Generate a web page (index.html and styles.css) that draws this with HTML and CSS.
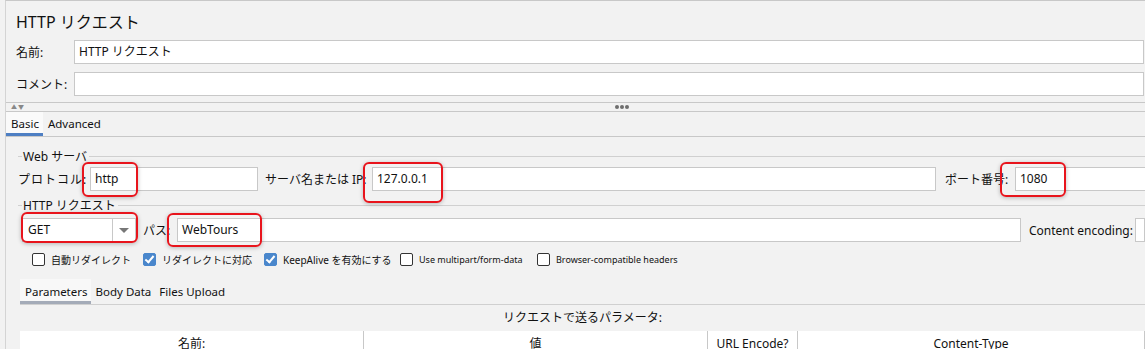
FILE: index.html
```html
<!DOCTYPE html>
<html lang="ja">
<head>
    <meta charset="UTF-8">
    <title>HTTP リクエスト</title>
    <link rel="stylesheet" href="styles.css">
</head>
<body>
    <div class="panel">
        <h1 class="title">HTTP リクエスト</h1>
        <div class="field-row first">
            <label class="field-label">名前:</label>
            <div class="input">HTTP リクエスト</div>
        </div>
        <div class="field-row">
            <label class="field-label">コメント:</label>
            <div class="input"></div>
        </div>

        <div class="splitter">
            <span class="arrows">▲▼</span>
            <span class="dots"><i></i><i></i><i></i></span>
        </div>

        <div class="tabs">
            <span class="tab active">Basic</span>
            <span class="tab">Advanced</span>
        </div>

        <div class="basic">
            <div class="group-title"><span>Web サーバ</span></div>
            <div class="server-row">
                <label class="lbl-protocol">プロトコル:</label>
                <div class="input protocol">http</div>
                <label class="lbl-server">サーバ名または IP:</label>
                <div class="input server">127.0.0.1</div>
                <label class="lbl-port">ポート番号:</label>
                <div class="input port">1080</div>
            </div>

            <div class="group-title second"><span>HTTP リクエスト</span></div>
            <div class="request-row">
                <div class="combo">
                    <span class="combo-value">GET</span>
                    <span class="combo-arrow"></span>
                </div>
                <label class="lbl-path">パス:</label>
                <div class="input path">WebTours</div>
                <label class="lbl-encoding">Content encoding:</label>
                <div class="input encoding"></div>
            </div>

            <div class="checks">
                <span class="check c1"><span class="box"></span>自動リダイレクト</span>
                <span class="check c2"><span class="box on"></span>リダイレクトに対応</span>
                <span class="check c3"><span class="box on"></span>KeepAlive を有効にする</span>
                <span class="check c4 small"><span class="box"></span>Use multipart/form-data</span>
                <span class="check small"><span class="box"></span>Browser-compatible headers</span>
            </div>

            <div class="subtabs">
                <span class="subtab active">Parameters</span>
                <span class="subtab">Body Data</span>
                <span class="subtab">Files Upload</span>
            </div>

            <div class="params-title">リクエストで送るパラメータ:</div>
            <div class="params-head">
                <div class="col name">名前:</div>
                <div class="col value">値</div>
                <div class="col encode">URL Encode?</div>
                <div class="col ctype">Content-Type</div>
            </div>
        </div>
    </div>

    <!-- annotation boxes drawn over the form -->
    <div class="mark m-protocol"></div>
    <div class="mark m-server"></div>
    <div class="mark m-port"></div>
    <div class="mark m-method"></div>
    <div class="mark m-path"></div>
</body>
</html>
```

FILE: styles.css
```css
body {
    margin: 0;
    background-color: #f2f2f2;
    font-family: "Noto Sans", "Noto Sans CJK JP", sans-serif;
    font-size: 12px;
    color: #111;
    height: 349px;
    overflow: hidden;
    position: relative;
}

.panel {
    margin-left: 5px;
    border-left: 1px solid #d4d4d4;
    border-top: 1px solid #c8c8c8;
    height: 349px;
}

.title {
    margin: 0;
    padding: 11px 0 0 10px;
    height: 28px;
    font-size: 16px;
    font-weight: normal;
    line-height: 20px;
}

.field-row {
    display: flex;
    align-items: center;
    padding-left: 10px;
    margin-bottom: 8px;
}

.field-label {
    width: 58px;
    flex-shrink: 0;
}

.input {
    box-sizing: border-box;
    height: 24px;
    background: #fff;
    border: 1px solid #c8c8c8;
    padding: 0 4px;
    line-height: 22px;
    white-space: nowrap;
    overflow: hidden;
}

.field-row .input {
    flex: 1;
    margin-right: 1px;
}

.splitter {
    margin-top: -2px;
    height: 8px;
    border-top: 1px solid #c8c8c8;
    border-bottom: 1px solid #c8c8c8;
    position: relative;
}

.arrows {
    position: absolute;
    left: 5px;
    top: 0;
    font-size: 6px;
    line-height: 8px;
    color: #888;
    letter-spacing: 1px;
}

.dots {
    position: absolute;
    left: 609px;
    top: 2px;
    display: flex;
    gap: 1px;
}

.dots i {
    width: 4px;
    height: 4px;
    border-radius: 50%;
    background: #6e6e6e;
}

.tabs {
    display: flex;
    height: 24px;
    border-bottom: 1px solid #c8c8c8;
    font-size: 11.5px;
}

.tab {
    padding: 4px 4px 0 5px;
    line-height: 16px;
}

.tab.active {
    background: #fafafa;
    border-bottom: 3px solid #4e7fc3;
}

.basic {
    padding-left: 12px;
}

.group-title {
    display: flex;
    align-items: center;
    margin-top: 11px;
    height: 16px;
}

.group-title::before {
    content: "";
    width: 4px;
    border-top: 1px solid #d0d0d0;
}

.group-title::after {
    content: "";
    flex: 1;
    border-top: 1px solid #d0d0d0;
}

.group-title span {
    padding: 0 2px 0 1px;
}

.group-title.second {
    margin-top: 6px;
}

.server-row,
.request-row {
    display: flex;
    align-items: center;
    margin-top: 3px;
    white-space: nowrap;
}

.server-row label,
.request-row label {
    flex-shrink: 0;
}

.lbl-protocol {
    width: 70px;
    letter-spacing: 1px;
}

.protocol {
    margin-left: 2px;
    width: 168px;
}

.lbl-server {
    width: 103px;
    margin-left: 7px;
    margin-right: 4px;
}

.server {
    width: 564px;
}

.lbl-port {
    width: 63px;
    margin-left: 9px;
    margin-right: 7px;
}

.port {
    flex: 1;
    margin-right: -2px;
}

.request-row {
    margin-top: 5px;
}

.combo {
    box-sizing: border-box;
    margin-left: 4px;
    width: 115px;
    height: 24px;
    display: flex;
    background: #fff;
    border: 1px solid #c8c8c8;
}

.combo-value {
    flex: 1;
    padding-left: 5px;
    line-height: 22px;
}

.combo-arrow {
    width: 22px;
    border-left: 1px solid #c8c8c8;
    position: relative;
}

.combo-arrow::after {
    content: "";
    position: absolute;
    left: 6px;
    top: 9px;
    border-left: 5px solid transparent;
    border-right: 5px solid transparent;
    border-top: 5px solid #777;
}

.lbl-path {
    width: 30px;
    margin-left: 7px;
    margin-right: 4px;
}

.path {
    width: 844px;
    flex-shrink: 0;
}

.lbl-encoding {
    width: 98px;
    margin-left: 8px;
    margin-right: 8px;
}

.encoding {
    flex: 1;
}

.checks {
    display: flex;
    align-items: center;
    margin-top: 9px;
    padding-left: 14px;
    height: 16px;
    font-size: 10px;
}

.check {
    display: flex;
    align-items: center;
    white-space: nowrap;
}

.c1 { width: 111px; }
.c2 { width: 121px; }
.c3 { width: 136px; }
.c4 { width: 137px; }

.check.small {
    font-size: 9px;
}

.box {
    box-sizing: border-box;
    width: 13px;
    height: 13px;
    border: 1px solid #333;
    background: #fff;
    border-radius: 2px;
    margin-right: 6px;
    position: relative;
    flex-shrink: 0;
}

.box.on {
    background: #4a87cc;
    border-color: #4a87cc;
}

.box.on::after {
    content: "";
    position: absolute;
    left: 3px;
    top: 0px;
    width: 3px;
    height: 7px;
    border-right: 2px solid #fff;
    border-bottom: 2px solid #fff;
    transform: rotate(40deg);
}

.subtabs {
    display: flex;
    margin-top: 12px;
    margin-left: 2px;
    height: 25px;
    border-bottom: 1px solid #d0d0d0;
    font-size: 11.5px;
}

.subtab {
    padding: 5px 3px 0 5px;
    line-height: 16px;
}

.subtab.active {
    background: #f8f8f8;
    border-bottom: 3px solid #a4abb8;
}

.params-title {
    text-align: center;
    margin-left: 2px;
    height: 26px;
    line-height: 26px;
}

.params-head {
    display: flex;
    margin-left: 2px;
    height: 30px;
    background: #fff;
}

.col {
    text-align: center;
    line-height: 26px;
    border-right: 1px solid #c8c8c8;
}

.col.name { width: 343px; }
.col.value { width: 343px; }
.col.encode { width: 89px; }
.col.ctype { width: 346px; }

.mark {
    position: absolute;
    box-sizing: border-box;
    border: 2px solid #e8141c;
    border-radius: 6px;
    box-shadow: 0 1px 4px rgba(0, 0, 0, 0.25);
}

.m-protocol { left: 82px; top: 162px; width: 56px; height: 35px; }
.m-server { left: 363px; top: 162px; width: 80px; height: 41px; }
.m-port { left: 1000px; top: 162px; width: 66px; height: 35px; }
.m-method { left: 21px; top: 212px; width: 117px; height: 31px; }
.m-path { left: 167px; top: 213px; width: 95px; height: 34px; }
```
